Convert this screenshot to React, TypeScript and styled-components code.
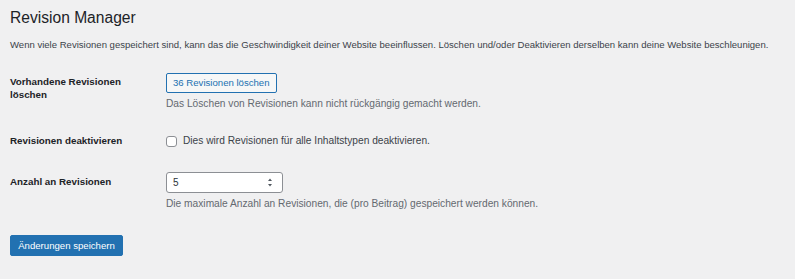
import React from "react";
import styled, { createGlobalStyle } from "styled-components";

const Global = createGlobalStyle`
  html, body { margin: 0; padding: 0; background: #f0f0f1; }
  body {
    font-family: "Liberation Sans", Arial, sans-serif;
    color: #3c434a;
    font-size: 9.2px;
    -webkit-font-smoothing: antialiased;
  }
  * { box-sizing: border-box; }
`;

const Wrap = styled.div`
  padding: 8px 10px 0 10px;
  width: 795px;
  height: 279px;
`;

const Title = styled.h1`
  margin: 0;
  font-size: 15.6px;
  line-height: 20px;
  font-weight: 400;
  color: #1d2327;
`;

const Intro = styled.p`
  margin: 10px 0 0 0;
  line-height: 14px;
  font-size: 9.55px;
  color: #3c434a;
  white-space: nowrap;
`;

const Table = styled.div`
  margin-top: 10px;
  display: flex;
  flex-direction: column;
`;

const Row = styled.div<{ $center?: boolean }>`
  display: grid;
  grid-template-columns: 156px 1fr;
  align-items: ${(p) => (p.$center ? "center" : "start")};
`;

const Th = styled.div<{ $w?: number }>`
  padding: 14px 7px 14px 0;
  font-weight: 700;
  font-size: 9.8px;
  line-height: 12.6px;
  color: #1d2327;
  width: ${(p) => p.$w ?? 120}px;
`;

const Td = styled.div`
  padding: 10.5px 0;
  display: flex;
  flex-direction: column;
  align-items: flex-start;
`;

const SecondaryButton = styled.button`
  font-family: inherit;
  font-size: 9.6px;
  height: 20px;
  line-height: 18px;
  padding: 0 6px;
  border: 1px solid #2271b1;
  border-radius: 2px;
  background: #f6f7f7;
  color: #2271b1;
  cursor: pointer;
`;

const Help = styled.p`
  margin: 4px 0 0 0;
  line-height: 14px;
  font-size: 10.2px;
  color: #646970;
  white-space: nowrap;
`;

const CheckLabel = styled.label`
  display: flex;
  align-items: center;
  gap: 6px;
  font-size: 10.2px;
  line-height: 14px;
  color: #3c434a;
`;

const Checkbox = styled.span`
  width: 11px;
  height: 11px;
  border: 1px solid #8c8f94;
  border-radius: 3px;
  background: #fff;
  display: inline-block;
`;

const InputWrap = styled.div`
  position: relative;
  width: 117px;
  height: 21px;
`;

const NumberInput = styled.input`
  width: 100%;
  height: 100%;
  border: 1px solid #8c8f94;
  border-radius: 3px;
  background: #fff;
  padding: 0 6px;
  font-family: inherit;
  font-size: 10px;
  color: #2c3338;
  outline: none;
`;

const Spinner = styled.svg`
  position: absolute;
  right: 10px;
  top: 5px;
`;

const Submit = styled.div`
  margin-top: 13px;
`;

const PrimaryButton = styled.button`
  font-family: inherit;
  font-size: 9.6px;
  height: 21px;
  padding: 0 7px;
  border: 1px solid #2271b1;
  border-radius: 2px;
  background: #2271b1;
  color: #fff;
  width: 113px;
  cursor: pointer;
`;

export default function App() {
  return (
    <>
      <Global />
      <Wrap>
        <Title>Revision Manager</Title>
        <Intro>
          Wenn viele Revisionen gespeichert sind, kann das die Geschwindigkeit deiner Website beeinflussen. Löschen und/oder Deaktivieren derselben kann deine Website beschleunigen.
        </Intro>
        <Table>
          <Row>
            <Th>Vorhandene Revisionen löschen</Th>
            <Td>
              <SecondaryButton>36 Revisionen löschen</SecondaryButton>
              <Help>Das Löschen von Revisionen kann nicht rückgängig gemacht werden.</Help>
            </Td>
          </Row>
          <Row $center>
            <Th $w={150}>Revisionen deaktivieren</Th>
            <Td>
              <CheckLabel>
                <Checkbox />
                Dies wird Revisionen für alle Inhaltstypen deaktivieren.
              </CheckLabel>
            </Td>
          </Row>
          <Row>
            <Th $w={150}>Anzahl an Revisionen</Th>
            <Td>
              <InputWrap>
                <NumberInput defaultValue="5" />
                <Spinner width="6" height="11" viewBox="0 0 6 11">
                  <path d="M3 1.5 L5 4 L1 4 Z" fill="#50575e" />
                  <path d="M3 9.5 L5 7 L1 7 Z" fill="#50575e" />
                </Spinner>
              </InputWrap>
              <Help>Die maximale Anzahl an Revisionen, die (pro Beitrag) gespeichert werden können.</Help>
            </Td>
          </Row>
        </Table>
        <Submit>
          <PrimaryButton>Änderungen speichern</PrimaryButton>
        </Submit>
      </Wrap>
    </>
  );
}
